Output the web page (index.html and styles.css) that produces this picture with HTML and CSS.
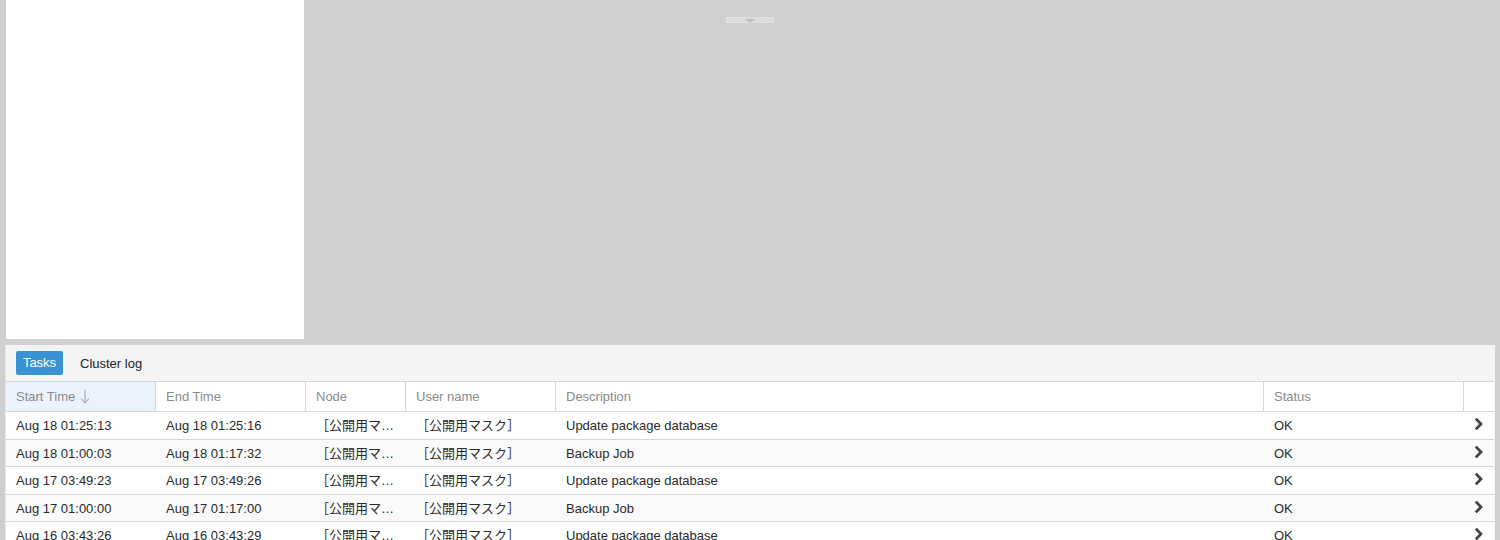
FILE: index.html
```html
<!DOCTYPE html>
<html>
<head>
<meta charset="utf-8">
<link rel="stylesheet" href="styles.css">
</head>
<body>
<div class="top">
  <div class="side"></div>
  <div class="canvas">
    <div class="handle"><span class="tri"></span></div>
  </div>
</div>
<div class="bottom">
  <div class="toolbar">
    <span class="tab active">Tasks</span>
    <span class="tab">Cluster log</span>
  </div>
  <div class="grid">
    <div class="row head">
      <div class="cell sorted">Start Time <svg class="arrow" width="10" height="15" viewBox="0 0 10 15"><path d="M5 0.5V14M1 9.5L5 14L9 9.5" fill="none" stroke="#a8a8a8" stroke-width="1.1"/></svg></div>
      <div class="cell">End Time</div>
      <div class="cell">Node</div>
      <div class="cell">User name</div>
      <div class="cell">Description</div>
      <div class="cell">Status</div>
      <div class="cell"></div>
    </div>
    <div class="row">
      <div class="cell">Aug 18 01:25:13</div>
      <div class="cell">Aug 18 01:25:16</div>
      <div class="cell cjk">［公開用マスク］</div>
      <div class="cell cjk">［公開用マスク］</div>
      <div class="cell">Update package database</div>
      <div class="cell">OK</div>
      <div class="cell go"><svg width="10" height="14" viewBox="0 0 10 14"><path d="M1.8 1.6L7 7L1.8 12.4" fill="none" stroke="#444" stroke-width="2.8"/></svg></div>
    </div>
    <div class="row">
      <div class="cell">Aug 18 01:00:03</div>
      <div class="cell">Aug 18 01:17:32</div>
      <div class="cell cjk">［公開用マスク］</div>
      <div class="cell cjk">［公開用マスク］</div>
      <div class="cell">Backup Job</div>
      <div class="cell">OK</div>
      <div class="cell go"><svg width="10" height="14" viewBox="0 0 10 14"><path d="M1.8 1.6L7 7L1.8 12.4" fill="none" stroke="#444" stroke-width="2.8"/></svg></div>
    </div>
    <div class="row">
      <div class="cell">Aug 17 03:49:23</div>
      <div class="cell">Aug 17 03:49:26</div>
      <div class="cell cjk">［公開用マスク］</div>
      <div class="cell cjk">［公開用マスク］</div>
      <div class="cell">Update package database</div>
      <div class="cell">OK</div>
      <div class="cell go"><svg width="10" height="14" viewBox="0 0 10 14"><path d="M1.8 1.6L7 7L1.8 12.4" fill="none" stroke="#444" stroke-width="2.8"/></svg></div>
    </div>
    <div class="row">
      <div class="cell">Aug 17 01:00:00</div>
      <div class="cell">Aug 17 01:17:00</div>
      <div class="cell cjk">［公開用マスク］</div>
      <div class="cell cjk">［公開用マスク］</div>
      <div class="cell">Backup Job</div>
      <div class="cell">OK</div>
      <div class="cell go"><svg width="10" height="14" viewBox="0 0 10 14"><path d="M1.8 1.6L7 7L1.8 12.4" fill="none" stroke="#444" stroke-width="2.8"/></svg></div>
    </div>
    <div class="row">
      <div class="cell">Aug 16 03:43:26</div>
      <div class="cell">Aug 16 03:43:29</div>
      <div class="cell cjk">［公開用マスク］</div>
      <div class="cell cjk">［公開用マスク］</div>
      <div class="cell">Update package database</div>
      <div class="cell">OK</div>
      <div class="cell go"><svg width="10" height="14" viewBox="0 0 10 14"><path d="M1.8 1.6L7 7L1.8 12.4" fill="none" stroke="#444" stroke-width="2.8"/></svg></div>
    </div>
  </div>
</div>
</body>
</html>
```

FILE: styles.css
```css
html, body {
  margin: 0;
  padding: 0;
  background: #cfcfcf;
  font-family: "Liberation Sans", Arial, "Noto Sans CJK JP", sans-serif;
  font-size: 13px;
  color: #2a2a2a;
  overflow: hidden;
}

.top {
  display: flex;
  height: 339px;
}

.side {
  margin-left: 6px;
  width: 298px;
  background: #fff;
}

.canvas {
  flex: 1;
  display: flex;
  justify-content: flex-start;
  padding-top: 17px;
  padding-left: 422px;
}

.handle {
  width: 46px;
  height: 4px;
  background: #dcdcdc;
  border: 1px solid #e2e2e2;
  display: flex;
  justify-content: center;
}

.tri {
  width: 0;
  height: 0;
  border-left: 5px solid transparent;
  border-right: 5px solid transparent;
  border-top: 4px solid #bdbdbd;
  margin-top: 1px;
}

.bottom {
  margin: 6px 5px 0 5px;
  background: #f4f4f4;
  border-left: 1px solid #e8e8e8;
}

.toolbar {
  height: 36px;
  display: flex;
  align-items: center;
  padding-left: 10px;
  gap: 17px;
}

.tab {
  line-height: 24px;
  padding-top: 1px;
  color: #222;
}

.tab.active {
  background: #3892d3;
  color: #fff;
  width: 47px;
  line-height: 24px;
  padding-top: 0;
  height: 24px;
  text-align: center;
  border-radius: 2px;
  margin-top: 0;
}

.grid {
  width: 1488px;
  background: #fff;
  border-top: 1px solid #d6d6d6;
}

.row {
  display: grid;
  grid-template-columns: 150px 150px 100px 150px 708px 200px 30px;
  height: 27.5px;
  border-bottom: 1px solid #d6d6d6;
  box-sizing: border-box;
}

.row:nth-child(odd) {
  background: #fafafa;
}

.row.head {
  height: 30px;
  background: #fff;
}

.cell {
  padding: 0 10px;
  white-space: nowrap;
  overflow: hidden;
  text-overflow: ellipsis;
  display: block;
  line-height: 28px;
  box-sizing: border-box;
}

.head .cell {
  color: #8a8a8a;
  line-height: 29px;
  border-right: 1px solid #d6d6d6;
}

.head .cell:last-child {
  border-right: none;
}

.head .cell.sorted {
  background: #eaf2fb;
}

.arrow {
  vertical-align: -3px;
  margin-left: 1px;
}

.cjk {
  font-family: "Liberation Sans", "Noto Sans CJK JP", sans-serif;
  padding-right: 8px;
}

.go {
  padding: 5px 0 0 10px;
  line-height: 0;
  display: flex;
  align-items: flex-start;
}
```
